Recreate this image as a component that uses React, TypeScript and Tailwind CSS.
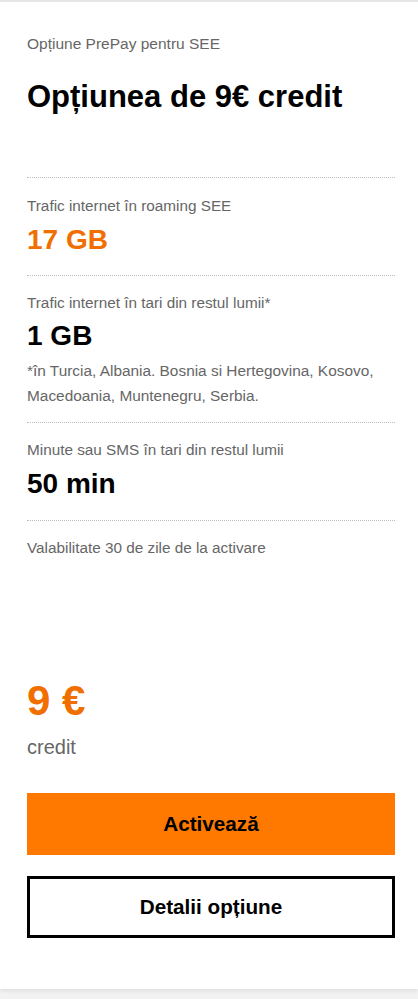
import React from "react";

const Dotted = () => (
  <div className="h-px w-full border-t border-dotted border-[#bdbdbd]" />
);

export default function App() {
  return (
    <div
      className="min-h-screen bg-[#f2f2f2]"
      style={{ fontFamily: '"Liberation Sans", Arial, sans-serif' }}
    >
      <div className="bg-white border-t-2 border-[#e6e6e6] pl-[27px] pr-[23px] pt-[32px] pb-[51px] shadow-[0_2px_4px_rgba(0,0,0,0.08)]">
        <div className="text-[15.5px] leading-[20px] text-[#666]">Opțiune PrePay pentru SEE</div>
        <div className="mt-[25px] text-[31px] leading-[36px] font-bold text-black">Opțiunea de 9€ credit</div>

        <div className="mt-[62px]"><Dotted /></div>

        <div className="pt-[18px] pb-[20px]">
          <div className="text-[15.3px] leading-[20px] text-[#666]">Trafic internet în roaming SEE</div>
          <div className="mt-[9px] text-[28px] leading-[30px] font-bold text-[#f16e00]">17 GB</div>
        </div>
        <Dotted />

        <div className="pt-[17px] pb-[14px]">
          <div className="text-[15.3px] leading-[20px] text-[#666]">Trafic internet în tari din restul lumii*</div>
          <div className="mt-[8px] text-[28px] leading-[30px] font-bold text-black">1 GB</div>
          <div className="mt-[7px] text-[15.4px] leading-[25px] text-[#666]">
            *în Turcia, Albania. Bosnia si Hertegovina, Kosovo, Macedoania, Muntenegru, Serbia.
          </div>
        </div>
        <Dotted />

        <div className="pt-[17px] pb-[21px]">
          <div className="text-[15.3px] leading-[20px] text-[#666]">Minute sau SMS în tari din restul lumii</div>
          <div className="mt-[9px] text-[28px] leading-[30px] font-bold text-black">50 min</div>
        </div>
        <Dotted />

        <div className="pt-[17px] text-[15.3px] leading-[20px] text-[#666]">Valabilitate 30 de zile de la activare</div>

        <div className="mt-[121px] text-[42px] leading-[44px] font-bold text-[#f16e00]">9 €</div>
        <div className="mt-[12px] text-[20px] leading-[24px] text-[#666]">credit</div>

        <button className="mt-[34px] flex h-[62px] w-full items-center justify-center bg-[#ff7900] text-[20.7px] font-bold text-black">
          Activează
        </button>
        <button className="mt-[21px] flex h-[62px] w-full items-center justify-center border-[3px] border-black bg-white text-[20.7px] font-bold text-black">
          Detalii opțiune
        </button>
      </div>
    </div>
  );
}
